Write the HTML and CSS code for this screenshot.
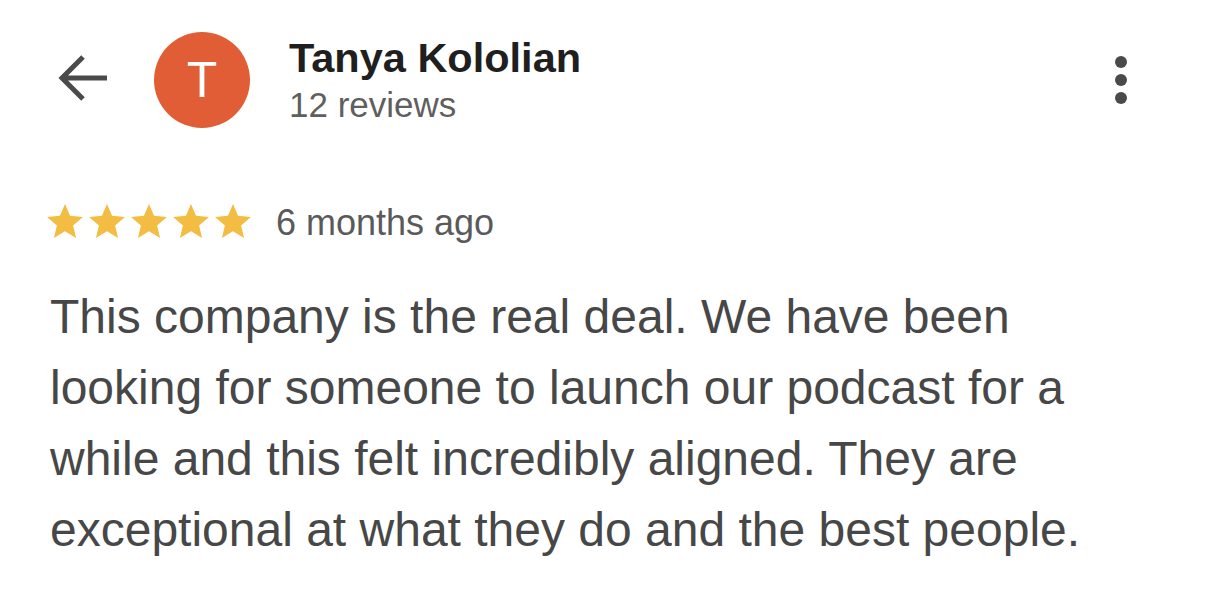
FILE: index.html
```html
<!DOCTYPE html>
<html lang="en">
<head>
    <meta charset="UTF-8">
    <title>Review</title>
    <link rel="stylesheet" href="styles.css">
</head>
<body>
    <div class="review">
        <div class="review-header">
            <svg class="back-arrow" width="50" height="50" viewBox="0 0 50 50">
                <path d="M4 24 H49 M25 3 L4 24 L25 45" fill="none" stroke="#4a4a4a" stroke-width="5"/>
            </svg>
            <div class="avatar">T</div>
            <div class="author">
                <div class="author-name">Tanya Kololian</div>
                <div class="author-count">12 reviews</div>
            </div>
            <svg class="more-menu" width="14" height="50" viewBox="0 0 14 50">
                <circle cx="7" cy="7" r="6" fill="#4a4a4a"/>
                <circle cx="7" cy="25" r="6" fill="#4a4a4a"/>
                <circle cx="7" cy="43" r="6" fill="#4a4a4a"/>
            </svg>
        </div>

        <div class="rating-row">
            <div class="stars">
                <svg class="star" viewBox="2 2 20 19"><path d="M12 17.27L18.18 21l-1.64-7.03L22 9.24l-7.19-.61L12 2 9.19 8.63 2 9.24l5.46 4.730L5.82 21z"/></svg>
                <svg class="star" viewBox="2 2 20 19"><path d="M12 17.27L18.18 21l-1.64-7.03L22 9.24l-7.19-.61L12 2 9.19 8.63 2 9.24l5.46 4.73L5.82 21z"/></svg>
                <svg class="star" viewBox="2 2 20 19"><path d="M12 17.27L18.18 21l-1.64-7.03L22 9.24l-7.19-.61L12 2 9.19 8.63 2 9.24l5.46 4.73L5.82 21z"/></svg>
                <svg class="star" viewBox="2 2 20 19"><path d="M12 17.27L18.18 21l-1.64-7.03L22 9.24l-7.19-.61L12 2 9.19 8.63 2 9.24l5.46 4.73L5.82 21z"/></svg>
                <svg class="star" viewBox="2 2 20 19"><path d="M12 17.27L18.18 21l-1.64-7.03L22 9.24l-7.19-.61L12 2 9.19 8.63 2 9.24l5.46 4.73L5.82 21z"/></svg>
            </div>
            <span class="review-date">6 months ago</span>
        </div>

        <p class="review-text">This company is the real deal. We have been<br>looking for someone to launch our podcast for a<br>while and this felt incredibly aligned. They are<br>exceptional at what they do and the best people.</p>
    </div>
</body>
</html>
```

FILE: styles.css
```css
body, html {
    margin: 0;
    padding: 0;
    background-color: #FFFFFF;
    font-family: 'Liberation Sans', Arial, sans-serif;
}
.review {
    padding: 32px 0 0 0;
}
.review-header {
    display: flex;
    align-items: center;
    height: 96px;
    padding: 0 78px 0 58px;
}
.back-arrow {
    display: block;
    margin-top: -2px;
}
.avatar {
    width: 96px;
    height: 96px;
    border-radius: 50%;
    background-color: #E05D35;
    color: #FFFFFF;
    font-size: 50px;
    display: flex;
    justify-content: center;
    align-items: center;
    margin-left: 46px; /* space after the arrow */
}
.author {
    flex: 1;
    margin-left: 39px;
}
.author-name {
    font-size: 41.5px;
    font-weight: 700;
    line-height: 46px;
    color: #1F1F1F;
}
.author-count {
    font-size: 35px;
    line-height: 40px;
    color: #5F5F5F;
    margin-top: 4px;
}
.more-menu {
    display: block;
}
.rating-row {
    display: flex;
    align-items: center;
    margin: 75px 0 0 47px;
    height: 36px;
}
.stars {
    display: flex;
    gap: 6px;
}
.star {
    width: 36px;
    height: 34px;
    fill: #F2BD42;
}
.review-date {
    font-size: 36px;
    line-height: 36px;
    color: #5A5A5A;
    margin-left: 25px;
    padding-top: 4px;
}
.review-text {
    margin: 42px 0 0 50px;
    font-size: 48px;
    line-height: 71px;
    color: #474747;
}
```
